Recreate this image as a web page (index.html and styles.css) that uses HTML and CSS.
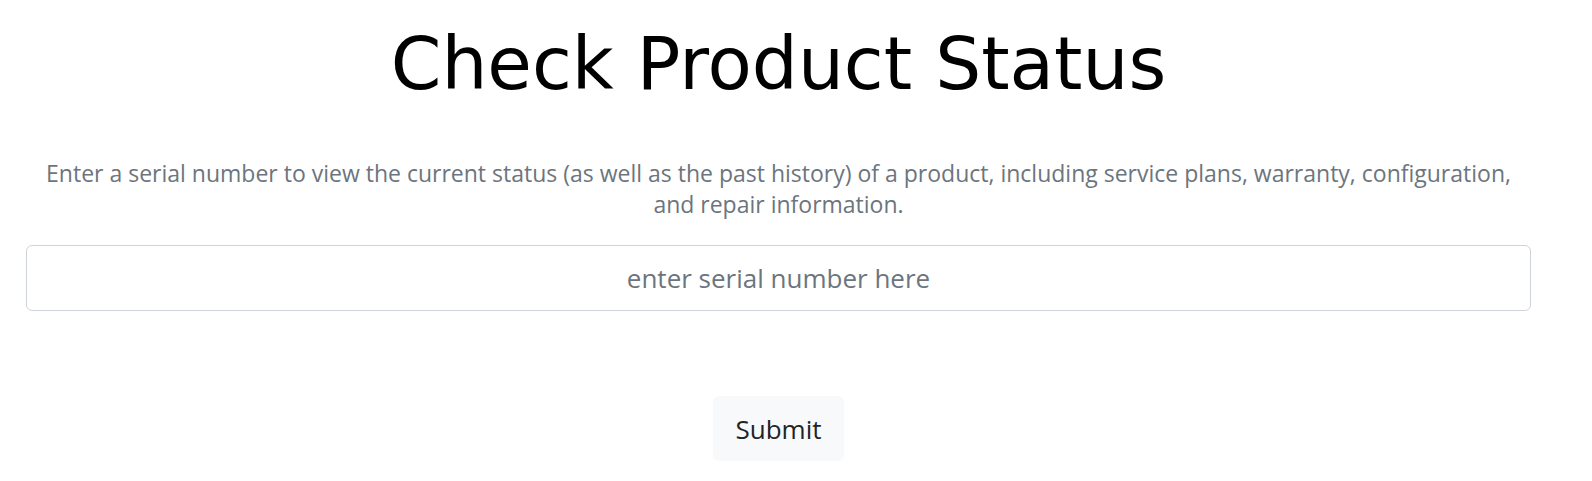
FILE: index.html
```html
<!DOCTYPE html>
<html lang="en">
<head>
  <meta charset="UTF-8" />
  <title>Check Product Status</title>
  <link rel="stylesheet" href="styles.css">
</head>
<body>

  <div class="page">
    <h1>Check Product Status</h1>

    <p class="lead">Enter a serial number to view the current status (as well as the past history) of a product, including service plans, warranty, configuration, and repair information.</p>

    <form class="status-form" onsubmit="return false">
      <input type="text" id="serial" placeholder="enter serial number here">
      <button type="submit">Submit</button>
    </form>
  </div>

</body>
</html>
```

FILE: styles.css
```css
body {
  margin: 0;
  font-family: 'Open Sans', sans-serif;
  background: #fff;
  color: #212529;
}

.page {
  width: 1505px;
  margin-left: 26px;
  text-align: center;
}

h1 {
  font-family: 'DejaVu Sans', sans-serif;
  font-weight: 400;
  font-size: 72.5px;
  line-height: 80px;
  margin: 23.5px 0 0;
  color: #000;
}

.lead {
  font-size: 23px;
  line-height: 30.5px;
  color: #6c757d;
  margin: 54.5px 0 26px;
}

.status-form {
  display: flex;
  flex-direction: column;
  align-items: center;
}

input {
  width: 100%;
  height: 66px;
  box-sizing: border-box;
  border: 1px solid #ced4da;
  border-radius: 6px;
  font-family: inherit;
  font-size: 26px;
  text-align: center;
  color: #212529;
}

input::placeholder {
  color: #6c757d;
}

input:focus {
  outline: none;
  border-color: #86b7fe;
}

button {
  margin-top: 85px;
  width: 131px;
  height: 65px;
  border: none;
  border-radius: 6px;
  background: #f8f9fa;
  font-family: inherit;
  font-size: 26px;
  color: #212529;
  cursor: pointer;
}
```
